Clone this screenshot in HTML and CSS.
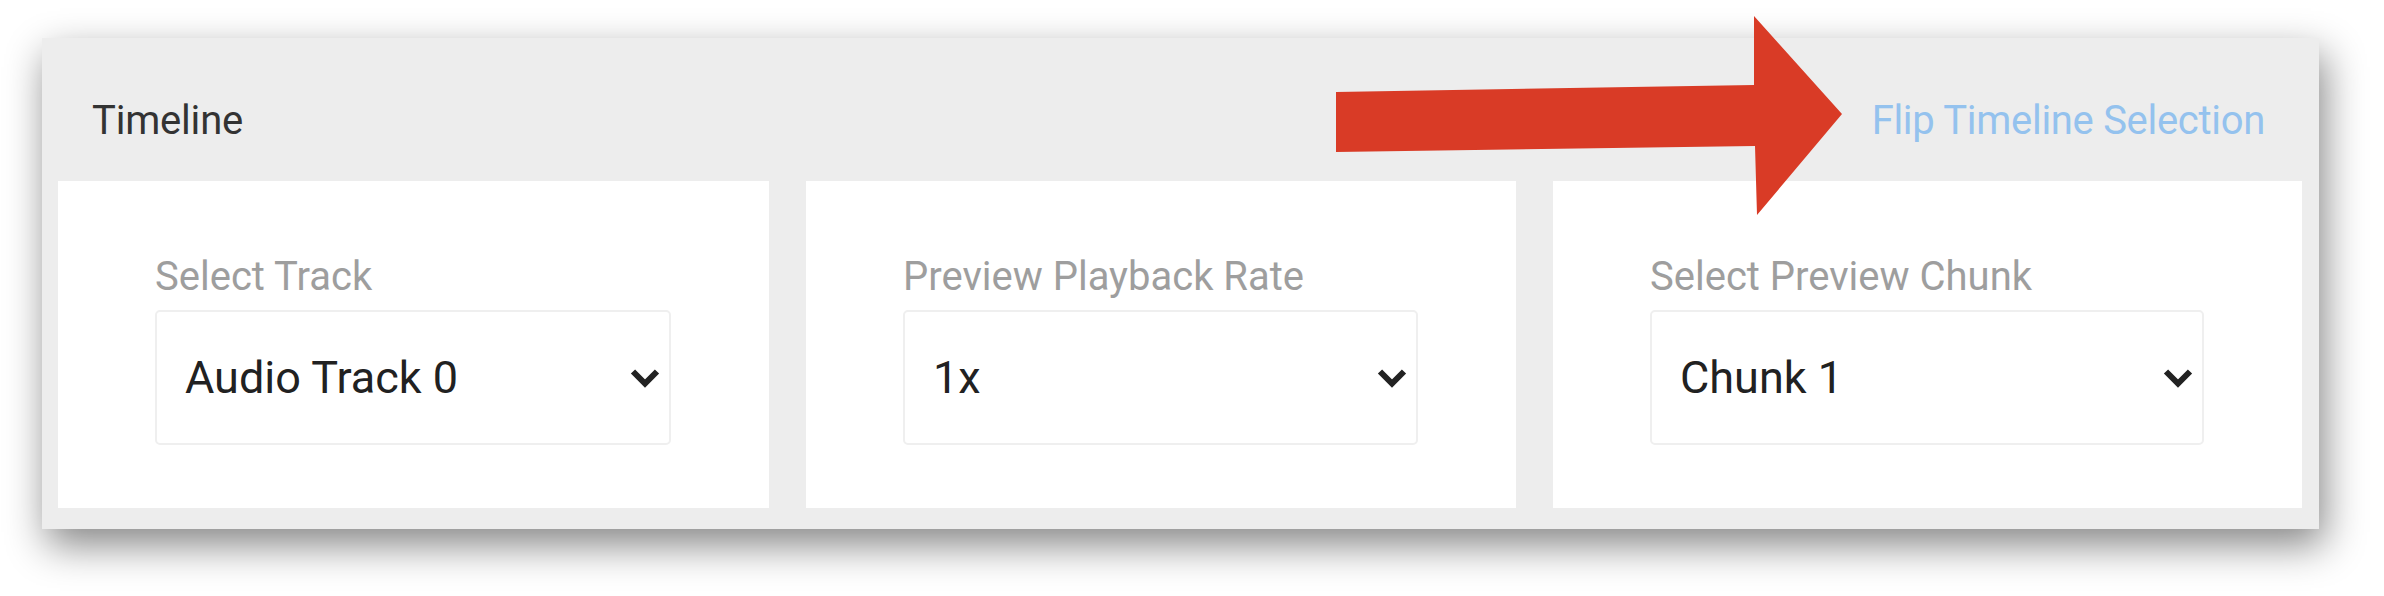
FILE: index.html
```html
<!DOCTYPE html>
<html lang="en">
<head>
<meta charset="utf-8">
<title>Timeline</title>
<link rel="stylesheet" href="styles.css">
</head>
<body>
<div class="stage">
  <section class="panel">
    <header class="panel-header">
      <h2 class="panel-title">Timeline</h2>
      <a class="flip-link">Flip Timeline Selection</a>
    </header>
    <div class="cards">
      <div class="card">
        <div class="field-label">Select Track</div>
        <div class="select">
          <span class="select-value">Audio Track 0</span>
          <svg class="chevron" width="30" height="20" viewBox="0 0 30 20"><polyline points="3,3.5 15,15.5 27,3.5" fill="none" stroke="#222" stroke-width="6"/></svg>
        </div>
      </div>
      <div class="card">
        <div class="field-label">Preview Playback Rate</div>
        <div class="select">
          <span class="select-value">1x</span>
          <svg class="chevron" width="30" height="20" viewBox="0 0 30 20"><polyline points="3,3.5 15,15.5 27,3.5" fill="none" stroke="#222" stroke-width="6"/></svg>
        </div>
      </div>
      <div class="card">
        <div class="field-label">Select Preview Chunk</div>
        <div class="select">
          <span class="select-value">Chunk 1</span>
          <svg class="chevron" width="30" height="20" viewBox="0 0 30 20"><polyline points="3,3.5 15,15.5 27,3.5" fill="none" stroke="#222" stroke-width="6"/></svg>
        </div>
      </div>
    </div>
  </section>
  <svg class="arrow" width="520" height="212" viewBox="0 0 520 212">
    <polygon points="6,82 424,75 424,6 512,104 427,205 425,136 6,142" fill="#d93b26"/>
  </svg>
</div>
</body>
</html>
```

FILE: styles.css
```css
* { box-sizing: border-box; }

html, body {
  margin: 0;
  padding: 0;
  background: #ffffff;
}

body {
  font-family: Roboto, "Liberation Sans", Arial, sans-serif;
  width: 2384px;
  height: 596px;
  overflow: hidden;
}

.stage {
  position: relative;
  padding: 38px 0 0 42px;
}

.panel {
  width: 2277px;
  height: 491px;
  background: #ededed;
  padding: 0 18px 21px 16px;
  box-shadow: 5px 16px 38px rgba(0, 0, 0, 0.48);
}

.panel-header {
  height: 143px;
  display: flex;
  justify-content: space-between;
  align-items: flex-start;
  padding: 58px 36px 0 34px;
}

.panel-title {
  margin: 0;
  font-size: 40px;
  line-height: 50px;
  font-weight: 400;
  color: #333333;
  letter-spacing: -0.2px;
}

.flip-link {
  font-size: 40px;
  line-height: 50px;
  color: #94c2ee;
  letter-spacing: -0.3px;
  cursor: pointer;
}

.cards {
  display: grid;
  grid-template-columns: 711px 710px 749px;
  column-gap: 37px;
  height: 327px;
}

.card {
  background: #ffffff;
  padding: 72px 98px 0 97px;
}

.field-label {
  font-size: 40px;
  line-height: 47px;
  color: #9e9e9e;
  margin-bottom: 10px;
}

.select {
  height: 135px;
  border: 2px solid #efefef;
  border-radius: 5px;
  display: flex;
  align-items: center;
  justify-content: space-between;
  padding: 0 9px 0 28px;
}

.select-value {
  font-size: 45px;
  color: #212121;
}

.chevron {
  display: block;
  margin-top: 1px;
}

.arrow {
  position: absolute;
  left: 1330px;
  top: 10px;
}
```
